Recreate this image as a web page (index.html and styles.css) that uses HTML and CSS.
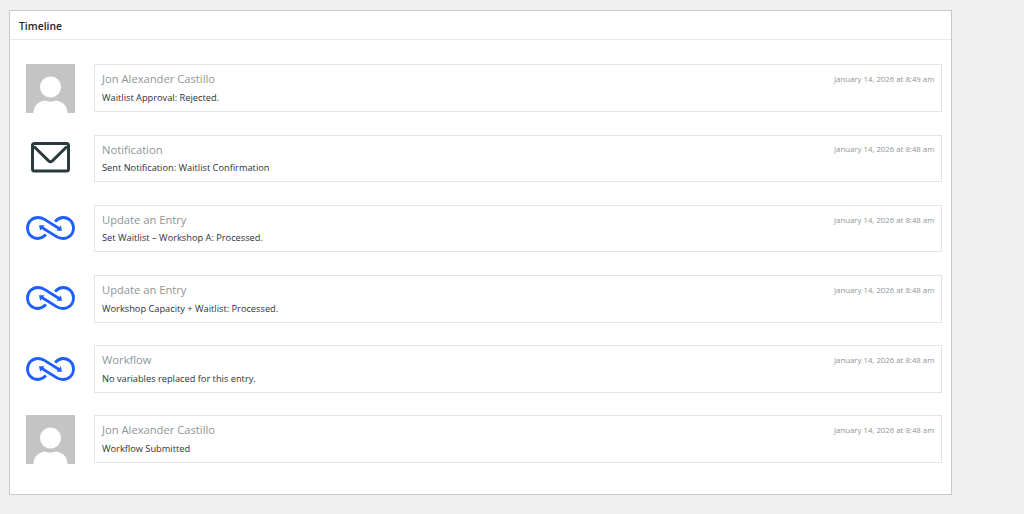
FILE: index.html
```html
<!DOCTYPE html>
<html lang="en">
<head>
<meta charset="utf-8">
<title>Timeline</title>
<link rel="stylesheet" href="styles.css">
</head>
<body>
<svg class="defs" width="0" height="0" aria-hidden="true">
  <defs>
    <symbol id="avatar" viewBox="0 0 49 49">
      <rect width="49" height="49" fill="#c4c4c4"/>
      <circle cx="24.500" cy="23" r="10.500" fill="#fff"/>
      <path d="M7.500 49C7.500 42 12 37.500 19 36.500 22 38 27 38 30 36.500 37 37.500 41.500 42 41.500 49z" fill="#fff"/>
    </symbol>
    <symbol id="mail" viewBox="0 0 49 36">
      <rect x="6.500" y="4.600" width="36" height="27.400" rx="2" fill="#fff" stroke="#2b3a3c" stroke-width="3"/>
      <path d="M8 7.500 22.600 21.900a3 3 0 0 0 3.800 0L41 7.500" fill="none" stroke="#2b3a3c" stroke-width="3"/>
    </symbol>
    <symbol id="loop" viewBox="0 0 49 26">
      <path d="M20 19.600C17.500 22 15 23.500 12 23.500 6 23.500 1.500 18.800 1.500 13S6 2.500 12 2.500C14.500 2.500 16.500 3.100 18.500 4.400L33.500 13.800" fill="none" stroke="#1f5eff" stroke-width="2.800"/>
      <path d="M29 6.400C31.500 4 34 2.500 37 2.500 43 2.500 47.500 7.200 47.500 13S43 23.500 37 23.500C34.500 23.500 32.500 22.900 30.500 21.600L15.500 12.200" fill="none" stroke="#1f5eff" stroke-width="2.800"/>
      <path d="M36 15.800 34.800 10.300 30.500 15.800z" fill="#1f5eff"/>
      <path d="M13 10.200 14.200 15.700 18.500 10.200z" fill="#1f5eff"/>
    </symbol>
  </defs>
</svg>
<section class="panel">
  <h2 class="panel-title">Timeline</h2>
  <ul class="timeline">
    <li class="item">
      <div class="thumb"><svg class="icon-avatar"><use href="#avatar"/></svg></div>
      <div class="card"><div class="card-head"><span class="name">Jon Alexander Castillo</span><span class="date">January 14, 2026 at 8:49 am</span></div><p class="note">Waitlist Approval: Rejected.</p></div>
    </li>
    <li class="item">
      <div class="thumb"><svg class="icon-mail"><use href="#mail"/></svg></div>
      <div class="card"><div class="card-head"><span class="name">Notification</span><span class="date">January 14, 2026 at 8:48 am</span></div><p class="note">Sent Notification: Waitlist Confirmation</p></div>
    </li>
    <li class="item">
      <div class="thumb"><svg class="icon-loop"><use href="#loop"/></svg></div>
      <div class="card"><div class="card-head"><span class="name">Update an Entry</span><span class="date">January 14, 2026 at 8:48 am</span></div><p class="note">Set Waitlist – Workshop A: Processed.</p></div>
    </li>
    <li class="item">
      <div class="thumb"><svg class="icon-loop"><use href="#loop"/></svg></div>
      <div class="card"><div class="card-head"><span class="name">Update an Entry</span><span class="date">January 14, 2026 at 8:48 am</span></div><p class="note">Workshop Capacity + Waitlist: Processed.</p></div>
    </li>
    <li class="item">
      <div class="thumb"><svg class="icon-loop"><use href="#loop"/></svg></div>
      <div class="card"><div class="card-head"><span class="name">Workflow</span><span class="date">January 14, 2026 at 8:48 am</span></div><p class="note">No variables replaced for this entry.</p></div>
    </li>
    <li class="item">
      <div class="thumb"><svg class="icon-avatar"><use href="#avatar"/></svg></div>
      <div class="card"><div class="card-head"><span class="name">Jon Alexander Castillo</span><span class="date">January 14, 2026 at 8:48 am</span></div><p class="note">Workflow Submitted</p></div>
    </li>
  </ul>
</section>
</body>
</html>
```
FILE: styles.css
```css
* { box-sizing: border-box; }
html, body { height: 100%; }
body {
  margin: 0;
  padding: 10px 71.600px 0 9px;
  background: #f0f0f0;
  font-family: "Open Sans", "Noto Sans", sans-serif;
  color: #23282d;
  overflow: hidden;
}
.defs { display: block; height: 0; }
.panel {
  height: 485px;
  background: #fff;
  border: 1px solid #c8c8c8;
}
.panel-title {
  margin: 0;
  height: 29px;
  padding: 8px 9px 0;
  font-size: 10.400px;
  line-height: 14px;
  font-weight: 600;
  color: #1d2327;
  border-bottom: 1px solid #eaeaea;
}
.timeline {
  list-style: none;
  margin: 0;
  padding: 24.400px 9px 0 16px;
  display: flex;
  flex-direction: column;
  gap: 22.600px;
}
.item { display: flex; gap: 19px; height: 47.600px; }
.thumb {
  flex: 0 0 49px;
  display: flex;
  justify-content: center;
  align-items: flex-start;
}
.icon-avatar { display: block; width: 49px; height: 49px; }
.icon-mail { display: block; width: 49px; height: 36px; margin-top: 4.800px; }
.icon-loop { display: block; width: 49px; height: 26px; margin-top: 10.500px; }
.card {
  flex: 1;
  border: 1px solid #e4e4e4;
  padding: 5px 7px 0;
  background: #fff;
}
.card-head {
  display: flex;
  justify-content: space-between;
  align-items: center;
  height: 17px;
}
.name { font-size: 11.200px; color: #8d9699; }
.date { font-size: 7.800px; color: #8d9699; margin-top: 0.500px; }
.note {
  margin: 3.600px 0 0;
  font-size: 9.250px;
  line-height: 14px;
  color: #2c3338;
}
```
